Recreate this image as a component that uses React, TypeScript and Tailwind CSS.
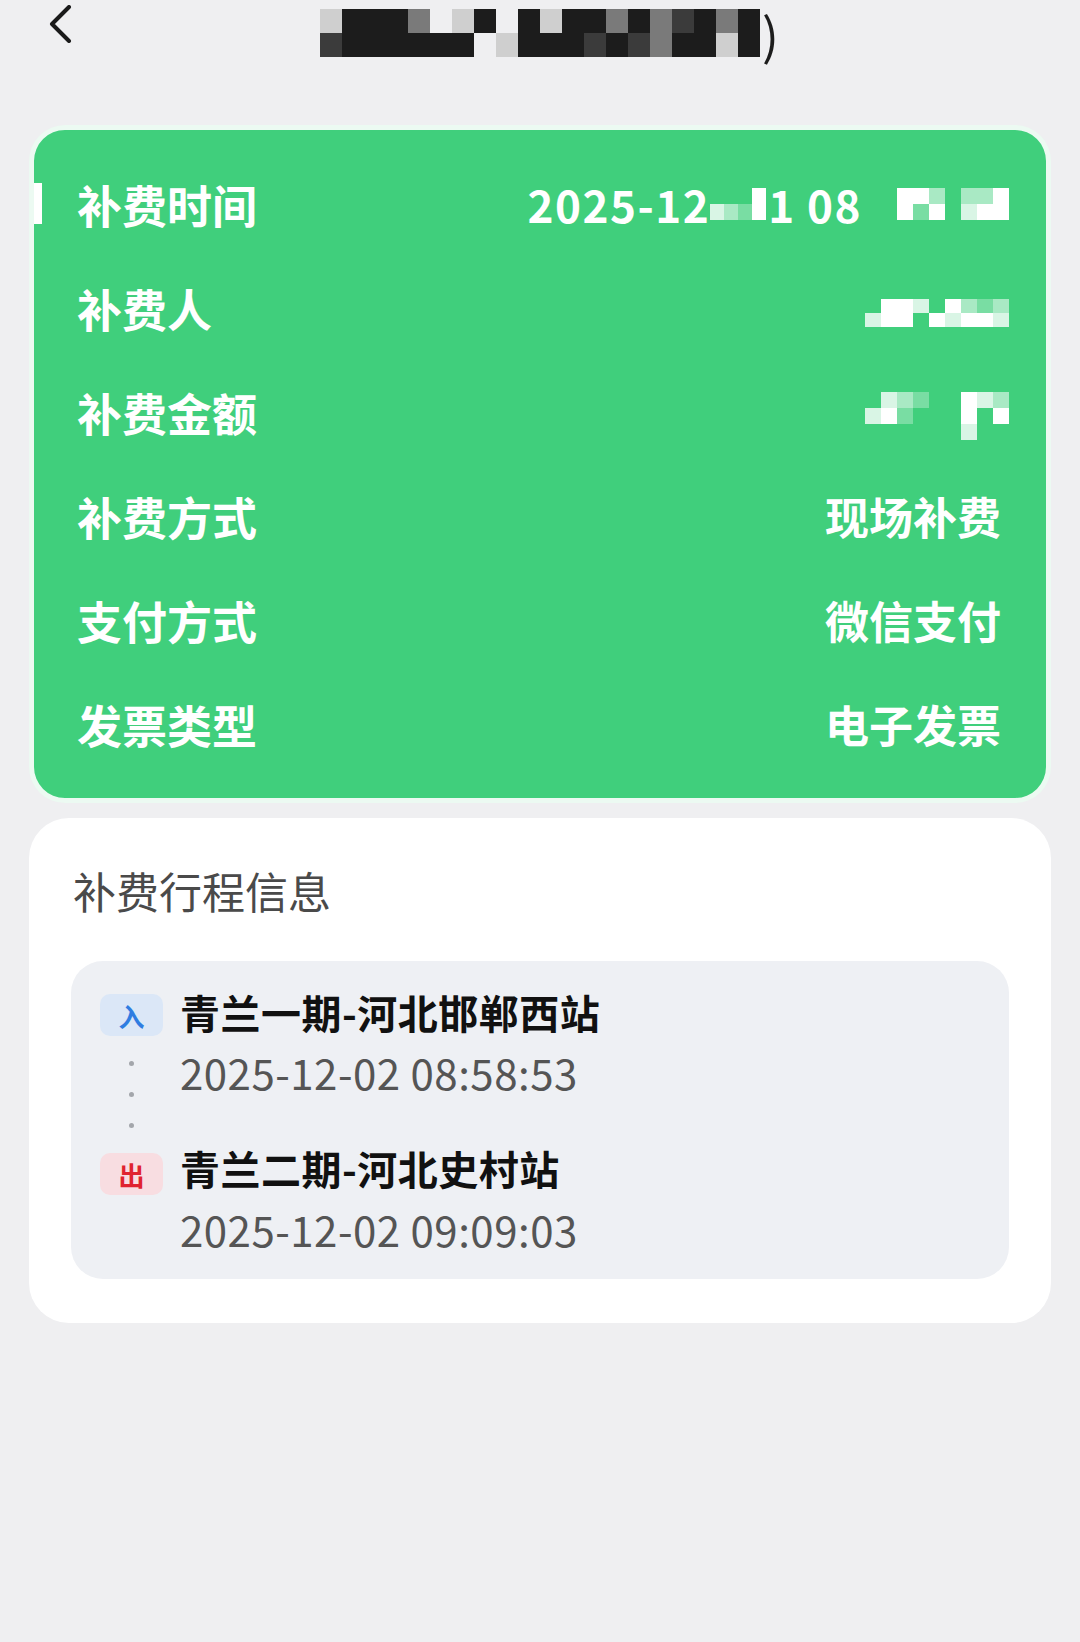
import type { ReactNode } from 'react'

const CELL: Record<string, string> = {
  w: 'bg-white',
  a: 'bg-white/80',
  b: 'bg-white/55',
  c: 'bg-white/30',
  '.': 'bg-transparent',
  d: 'bg-[#1c1c1c]',
  m: 'bg-[#3b3b3b]',
  g: 'bg-[#7a7a7a]',
  l: 'bg-[#cfcfcf]',
  e: 'bg-[#efeff1]',
}

function Mosaic({ rows, cell }: { rows: string[]; cell: string }) {
  return (
    <div className="flex flex-col">
      {rows.map((r, i) => (
        <div key={i} className="flex">
          {r.split('').map((ch, j) => (
            <div key={j} className={`${cell} ${CELL[ch]}`} />
          ))}
        </div>
      ))}
    </div>
  )
}

function Row({ label, children }: { label: string; children: ReactNode }) {
  return (
    <div className="flex h-[104px] items-center justify-between">
      <span className="text-[45px] font-bold leading-none text-white">{label}</span>
      <div className="flex items-center text-[44px] font-bold leading-none text-white">{children}</div>
    </div>
  )
}

export default function App() {
  return (
    <div
      className="min-h-[1642px] w-[1080px] bg-[#efeff1]"
      style={{ fontFamily: '"Noto Sans CJK SC", "Noto Sans", sans-serif' }}
    >
      {/* header */}
      <div className="relative h-[125px]">
        <div className="absolute left-[47px] top-[5px]">
          <svg width="26" height="38" viewBox="0 0 26 38" fill="none">
            <path d="M22 2 L5 19 L22 36" stroke="#1a1a1a" strokeWidth="4" strokeLinecap="round" strokeLinejoin="round" />
          </svg>
        </div>
        <div className="absolute left-[320px] top-[8px] flex items-center">
          <Mosaic
            cell="w-[22px] h-[24px]"
            rows={['ldddgeldedlddgdgmdgd', 'mddddddeldddmdmgddld']}
          />
          <span className="ml-[2px] text-[50px] leading-none text-[#1c1c1c]">)</span>
        </div>
      </div>

      {/* green summary card */}
      <div className="relative mx-[29px] rounded-[36px] border-[5px] border-white/90 bg-[#40cf7c] pb-[22px] pl-[43px] pr-[45px] pt-[22px]">
        <div className="absolute left-0 top-[53px] h-[41px] w-[8px] bg-white" />
        <Row label="补费时间">
          <div className="mr-[-8px] flex items-center tracking-[1.5px]">
            <span>2025-12</span>
            <Mosaic cell="w-[14px] h-[16px]" rows={['...w', 'abcw']} />
            <span className="ml-[2px]">1 08</span>
            <div className="ml-[35px]">
              <Mosaic cell="w-[16px] h-[16px]" rows={['wwb.bbw', 'wcw.aww']} />
            </div>
          </div>
        </Row>
        <Row label="补费人">
          <div className="mr-[-8px] mt-[10px]">
            <Mosaic cell="w-[16px] h-[14px]" rows={['.wwa.wbcb', 'aww.wawwa']} />
          </div>
        </Row>
        <Row label="补费金额">
          <div className="mr-[-8px] mt-[8px]">
            <Mosaic cell="w-[16px] h-[16px]" rows={['.abc..wab', 'awc...w.w', '......a..']} />
          </div>
        </Row>
        <Row label="补费方式">
          <span>现场补费</span>
        </Row>
        <Row label="支付方式">
          <span>微信支付</span>
        </Row>
        <Row label="发票类型">
          <span>电子发票</span>
        </Row>
      </div>

      {/* trip info card */}
      <div className="mx-[29px] mt-[15px] rounded-[40px] bg-white px-[42px] pb-[44px] pt-[47px]">
        <div className="pl-[2px] text-[43px] leading-[50px] text-[#4a4a4a]">补费行程信息</div>
        <div className="mt-[46px] flex rounded-[32px] bg-[#eef0f4] pb-[25px] pl-[29px] pt-[28px]">
          <div className="mt-[5px] flex w-[63px] flex-col items-center">
            <div className="flex h-[42px] w-[63px] items-center justify-center rounded-[10px] bg-[#dbe7f7] text-[26px] font-bold text-[#2f7de1]">
              入
            </div>
            <div className="flex flex-col items-center gap-[26px] py-[25px]">
              <div className="h-[5px] w-[5px] rounded-full bg-[#a3a6ab]" />
              <div className="h-[5px] w-[5px] rounded-full bg-[#a3a6ab]" />
              <div className="h-[5px] w-[5px] rounded-full bg-[#a3a6ab]" />
            </div>
            <div className="flex h-[42px] w-[63px] items-center justify-center rounded-[10px] bg-[#f8dde1] text-[26px] font-bold text-[#e0232f]">
              出
            </div>
          </div>
          <div className="ml-[17px] flex flex-col">
            <div className="text-[40px] font-bold leading-[46px] tracking-[0.5px] text-[#111111]">青兰一期-河北邯郸西站</div>
            <div className="mt-[12px] text-[42px] leading-[50px] tracking-[0.5px] text-[#555555]">2025-12-02 08:58:53</div>
            <div className="mt-[48px] text-[40px] font-bold leading-[46px] tracking-[0.5px] text-[#111111]">青兰二期-河北史村站</div>
            <div className="mt-[13px] text-[42px] leading-[50px] tracking-[0.5px] text-[#555555]">2025-12-02 09:09:03</div>
          </div>
        </div>
      </div>
    </div>
  )
}
